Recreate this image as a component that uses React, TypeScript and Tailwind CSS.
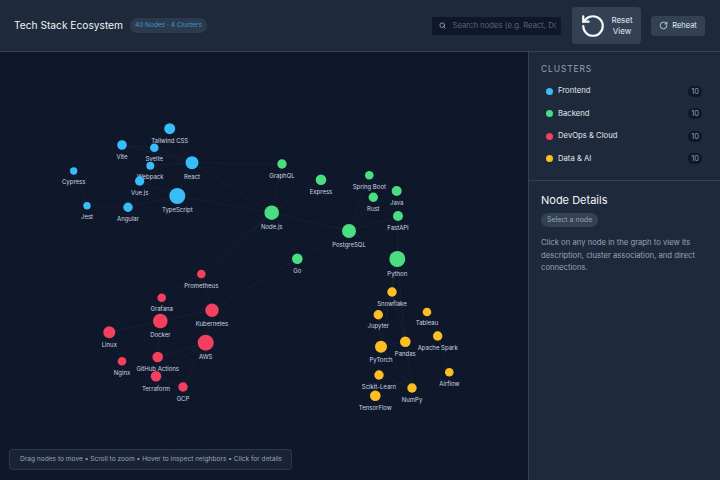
import { RotateCcw, RotateCw, Search } from 'lucide-react'

const FRONTEND = '#38bdf8'
const BACKEND = '#4ade80'
const DEVOPS = '#f43f5e'
const DATA = '#fbbf24'

// x, y, radius, label baseline, all in page coordinates
const NODES: [string, number, number, number, number, string][] = [
  ['Tailwind CSS', 169.7, 128.7, 5.5, 143, FRONTEND],
  ['Vite', 122, 145, 4.8, 159, FRONTEND],
  ['Svelte', 154.3, 147.7, 4.3, 160.5, FRONTEND],
  ['React', 192, 162.7, 6.5, 178.5, FRONTEND],
  ['Webpack', 150.3, 165.7, 4, 178.5, FRONTEND],
  ['Vue.js', 139.7, 181, 4.7, 195, FRONTEND],
  ['Cypress', 73.7, 171, 3.7, 183.5, FRONTEND],
  ['TypeScript', 177.3, 196, 8, 212, FRONTEND],
  ['Jest', 87, 205.7, 3.7, 218.5, FRONTEND],
  ['Angular', 128, 207.3, 4.7, 221, FRONTEND],
  ['GraphQL', 282, 164, 4.7, 177.5, BACKEND],
  ['Express', 321, 179.7, 5.3, 194, BACKEND],
  ['Spring Boot', 369.3, 175.3, 4.3, 188.5, BACKEND],
  ['Rust', 373.3, 197.3, 4.7, 211, BACKEND],
  ['Java', 396.7, 191, 5, 205, BACKEND],
  ['FastAPI', 398, 216, 5, 229.5, BACKEND],
  ['Node.js', 271.7, 212.7, 7.3, 229, BACKEND],
  ['PostgreSQL', 349, 231, 7, 247, BACKEND],
  ['Go', 297.3, 258.7, 5.3, 273, BACKEND],
  ['Python', 397.3, 259, 8, 276, BACKEND],
  ['Prometheus', 201.3, 274, 4.3, 287.5, DEVOPS],
  ['Grafana', 161.7, 297.7, 4.3, 310.5, DEVOPS],
  ['Kubernetes', 212, 310.3, 6.7, 325.5, DEVOPS],
  ['Docker', 160.3, 321, 7.3, 337, DEVOPS],
  ['Linux', 109.3, 332.3, 6, 347, DEVOPS],
  ['AWS', 205.7, 342.7, 8, 359, DEVOPS],
  ['Nginx', 122, 361.3, 4.3, 374.5, DEVOPS],
  ['GitHub Actions', 157.7, 357, 5.3, 371, DEVOPS],
  ['Terraform', 156, 376.3, 5.3, 390.5, DEVOPS],
  ['GCP', 183, 387, 4.7, 400.5, DEVOPS],
  ['Snowflake', 392, 292, 4.7, 306, DATA],
  ['Tableau', 427, 312, 4.3, 325, DATA],
  ['Jupyter', 378.3, 314.7, 4.7, 328, DATA],
  ['Apache Spark', 437.7, 336, 4.7, 349.5, DATA],
  ['Pandas', 405.3, 341.7, 5.3, 356, DATA],
  ['PyTorch', 381, 346.7, 6, 362, DATA],
  ['Airflow', 449.3, 372.3, 4.3, 385.5, DATA],
  ['Scikit-Learn', 379, 375, 4.7, 388.5, DATA],
  ['NumPy', 412, 388, 4.7, 402, DATA],
  ['TensorFlow', 375.3, 395.7, 5.3, 409.5, DATA],
]

const EDGES: [string, string][] = [
  ['Tailwind CSS', 'React'],
  ['Vite', 'Svelte'],
  ['Vite', 'React'],
  ['Svelte', 'React'],
  ['Webpack', 'React'],
  ['Vue.js', 'TypeScript'],
  ['Angular', 'TypeScript'],
  ['Jest', 'Angular'],
  ['Jest', 'Cypress'],
  ['React', 'TypeScript'],
  ['React', 'GraphQL'],
  ['React', 'Node.js'],
  ['TypeScript', 'Node.js'],
  ['GraphQL', 'Node.js'],
  ['Express', 'Node.js'],
  ['Node.js', 'PostgreSQL'],
  ['Node.js', 'Docker'],
  ['Node.js', 'Prometheus'],
  ['Spring Boot', 'Java'],
  ['Spring Boot', 'PostgreSQL'],
  ['Rust', 'PostgreSQL'],
  ['FastAPI', 'Python'],
  ['FastAPI', 'PostgreSQL'],
  ['PostgreSQL', 'Python'],
  ['PostgreSQL', 'Go'],
  ['Go', 'Kubernetes'],
  ['Python', 'Pandas'],
  ['Python', 'PyTorch'],
  ['Python', 'Snowflake'],
  ['Prometheus', 'Grafana'],
  ['Prometheus', 'Kubernetes'],
  ['Docker', 'Kubernetes'],
  ['Docker', 'Linux'],
  ['Docker', 'GitHub Actions'],
  ['Kubernetes', 'AWS'],
  ['AWS', 'Terraform'],
  ['AWS', 'GCP'],
  ['AWS', 'GitHub Actions'],
  ['Linux', 'Nginx'],
  ['Terraform', 'GCP'],
  ['GitHub Actions', 'Terraform'],
  ['Snowflake', 'Pandas'],
  ['Pandas', 'NumPy'],
  ['Pandas', 'PyTorch'],
  ['PyTorch', 'NumPy'],
  ['PyTorch', 'TensorFlow'],
  ['Scikit-Learn', 'NumPy'],
  ['Tableau', 'Apache Spark'],
  ['Apache Spark', 'Airflow'],
  ['Jupyter', 'PyTorch'],
]

const CLUSTERS: [string, string][] = [
  ['Frontend', FRONTEND],
  ['Backend', BACKEND],
  ['DevOps & Cloud', DEVOPS],
  ['Data & AI', DATA],
]

function Graph() {
  const find = (name: string) => NODES.find((n) => n[0] === name)!
  return (
    <svg className="absolute inset-0 h-full w-full" viewBox="0 52 528 428">
      {EDGES.map(([a, b]) => {
        const from = find(a)
        const to = find(b)
        return (
          <line
            key={a + b}
            x1={from[1]}
            y1={from[2]}
            x2={to[1]}
            y2={to[2]}
            stroke="#94a3b8"
            strokeOpacity={0.06}
            strokeWidth={1}
          />
        )
      })}
      {NODES.map(([name, x, y, r, labelY, color]) => (
        <g key={name}>
          <circle cx={x} cy={y} r={r} fill={color} />
          <text x={x} y={labelY} textAnchor="middle" fontSize={6} fill="#cbd5e1">
            {name}
          </text>
        </g>
      ))}
    </svg>
  )
}

export default function App() {
  return (
    <div className="flex h-[480px] w-[720px] flex-col overflow-hidden bg-[#0f172a] font-['Inter',sans-serif] text-[#f1f5f9]">
      {/* Header */}
      <header className="flex h-[52px] shrink-0 items-center justify-between border-b border-[#334155] bg-[#1e293b] pl-[14px] pr-[15px]">
        <div className="flex items-center gap-[7px]">
          <h1 className="text-[10.2px] font-normal leading-none">Tech Stack Ecosystem</h1>
          <span className="rounded-full bg-[#334155]/70 px-[5px] py-[3px] text-[6.5px] leading-[9px] text-[#38bdf8]/75">
            40 Nodes · 4 Clusters
          </span>
        </div>
        <div className="flex items-center gap-[10px]">
          <div className="flex h-[20px] w-[131.5px] items-center gap-[7px] rounded-[3px] border border-[#1e293b] bg-[#0f172a] pl-[7px] pr-[5px]">
            <Search className="shrink-0 text-[#94a3b8]" size={7} strokeWidth={3} />
            <input
              className="min-w-0 flex-1 bg-transparent text-[7.7px] outline-none placeholder:text-[#56657b]"
              placeholder="Search nodes (e.g. React, Docker)"
            />
          </div>
          <button className="flex h-[37px] w-[69px] items-center justify-center gap-[5px] rounded-[4px] bg-[#334155] text-[8px] leading-[11px] text-[#e2e8f0]">
            <RotateCcw size={26} strokeWidth={2} className="text-[#f8fafc]" />
            <span className="text-center">
              Reset
              <br />
              View
            </span>
          </button>
          <button className="flex h-[20px] w-[54px] items-center justify-center gap-[4px] rounded-[3px] bg-[#334155] text-[7.5px] text-[#e2e8f0]">
            <RotateCw size={9} />
            Reheat
          </button>
        </div>
      </header>

      <div className="flex min-h-0 flex-1">
        {/* Graph canvas */}
        <main className="relative flex-1">
          <Graph />
          <div className="absolute bottom-[10px] left-[9px] flex h-[21px] w-[283px] items-center rounded-[4px] border border-[#334155]/70 bg-[#1e293b]/70 pl-[10px] text-[6.6px] whitespace-nowrap text-[#94a3b8]">
            Drag nodes to move • Scroll to zoom • Hover to inspect neighbors • Click for details
          </div>
        </main>

        {/* Sidebar */}
        <aside className="flex w-[192px] shrink-0 flex-col border-l border-[#334155] bg-[#1e293b]">
          <section className="h-[129px] border-b border-[#334155] pl-[12px] pr-[18px] pt-[11px]">
            <h2 className="text-[8.5px] leading-[12px] tracking-[0.1em] text-[#94a3b8]">CLUSTERS</h2>
            <ul className="mt-[5px] flex flex-col">
              {CLUSTERS.map(([name, color]) => (
                <li key={name} className="flex h-[22.5px] items-center pl-[5px] text-[7.7px] text-[#e2e8f0]">
                  <span className="mr-[5px] h-[7px] w-[7px] rounded-full" style={{ backgroundColor: color }} />
                  <span className="flex-1">{name}</span>
                  <span className="rounded-full bg-[#0f172a] px-[3px] text-[7.5px] leading-[11px] text-[#94a3b8]">10</span>
                </li>
              ))}
            </ul>
          </section>
          <section className="pl-[12px] pr-[10px] pt-[11px]">
            <h2 className="text-[11px] font-normal leading-[16px]">Node Details</h2>
            <span className="mt-[5px] block w-fit rounded-full bg-[#334155] px-[6px] py-[2px] text-[7px] leading-[10px] text-[#94a3b8]">
              Select a node
            </span>
            <p className="mt-[10px] text-[7.7px] leading-[12.5px] text-[#94a3b8]">
              Click on any node in the graph to view its description, cluster association, and direct connections.
            </p>
          </section>
        </aside>
      </div>
    </div>
  )
}
